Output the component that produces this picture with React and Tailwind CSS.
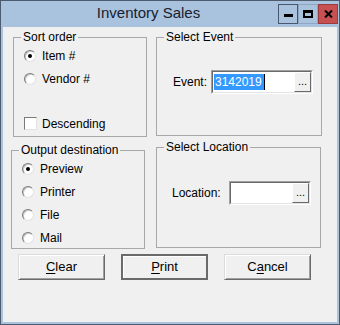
import React from 'react';

const font = { fontFamily: '"Liberation Sans", Arial, sans-serif' };

const Radio = ({ checked, label }) => (
  <div className="flex items-center h-[17px]">
    <span className="relative w-[12px] h-[12px] rounded-full bg-white border border-t-[#7a7a7a] border-l-[#7a7a7a] border-b-[#e2e2e2] border-r-[#e2e2e2] shadow-[inset_1px_1px_0_#c8c8c8]">
      {checked && (
        <span className="absolute left-[3px] top-[3px] w-[4px] h-[4px] rounded-full bg-black" />
      )}
    </span>
    <span className="ml-[6px] text-[12px] text-black leading-none">{label}</span>
  </div>
);

// group box; padding goes on the inner div so the legend stays at the left
const Group = ({ title, className, inner, children }) => (
  <fieldset className={`border border-[#a8a8a8] ${className}`}>
    <legend className="ml-[7px] px-[2px] text-[12px] leading-[14px] text-black">{title}</legend>
    <div className={inner}>{children}</div>
  </fieldset>
);

const Lookup = ({ width, value }) => (
  <div className={`flex h-[24px] ${width} border border-t-[#a0a0a0] border-l-[#a0a0a0] border-b-white border-r-white`}>
    <div className="flex flex-1 border border-t-[#696969] border-l-[#696969] border-b-[#e3e3e3] border-r-[#e3e3e3] bg-white">
      <div className="flex-1 flex items-center pl-[1px]">
        {value && (
          <>
            <span className="bg-[#3399ff] text-white text-[12px] leading-[16px] pl-[1px] pr-[2px]">{value}</span>
            <span className="w-[1px] h-[16px] bg-black" />
          </>
        )}
      </div>
      <button className="w-[17px] bg-[#f0f0f0] border border-t-white border-l-white border-b-[#696969] border-r-[#696969] text-[11px] leading-none text-black flex items-end justify-center pb-[4px]">
        ...
      </button>
    </div>
  </div>
);

const PushButton = ({ children, primary }) => (
  <button
    className={`w-[87px] h-[26px] bg-[#f0f0f0] text-[13px] text-black flex items-center justify-center ${
      primary
        ? 'border-2 border-[#6a6a6a] shadow-[inset_1px_1px_0_#ffffff]'
        : 'border border-t-[#dcdcdc] border-l-[#dcdcdc] border-b-[#6a6a6a] border-r-[#6a6a6a] shadow-[inset_1px_1px_0_#ffffff,inset_-1px_-1px_0_#a0a0a0]'
    }`}
  >
    {children}
  </button>
);

export default function App() {
  return (
    <div className="w-[340px] h-[325px] bg-[#a9c2dd] border border-[#4d5b6c] flex flex-col" style={font}>
      {/* title bar */}
      <div className="h-[26px] flex items-start">
        <div className="flex-1 flex justify-center pl-[18px] pt-[3px]">
          <span className="text-[15px] leading-[18px] text-[#16202e]">Inventory Sales</span>
        </div>
        <div className="flex pt-[3px] pr-[1px]">
          <div className="w-[20px] h-[20px] border border-[#48596f] flex items-end justify-center pb-[6px]">
            <span className="w-[9px] h-[3px] bg-black" />
          </div>
          <div className="w-[20px] h-[20px] border border-[#8ea6c2] flex items-center justify-center">
            <span className="w-[10px] h-[8px] border-2 border-t-[3px] border-black" />
          </div>
          <div className="w-[20px] h-[20px] bg-[#c75050] border border-[#9c3b3b] flex items-center justify-center">
            <svg width="9" height="8" viewBox="0 0 9 8">
              <path d="M1 0.5 L8 7.5 M8 0.5 L1 7.5" stroke="#000" strokeWidth="2" />
            </svg>
          </div>
        </div>
      </div>

      {/* client area */}
      <div className="flex-1 mx-[2px] mb-[2px] bg-[#f0f0f0] pt-[3px] flex flex-col">
        <div className="flex">
          <div className="w-[144px] flex flex-col">
            <Group title="Sort order" className="ml-[10px] w-[134px] h-[107px]" inner="pl-[10px]">
              <div className="mt-[3px]">
                <Radio checked label="Item #" />
              </div>
              <div className="mt-[6px]">
                <Radio label="Vendor #" />
              </div>
              <div className="mt-[28px] flex items-center h-[17px]">
                <span className="w-[13px] h-[13px] bg-white border border-t-[#7a7a7a] border-l-[#7a7a7a] border-b-[#e2e2e2] border-r-[#e2e2e2]" />
                <span className="ml-[5px] text-[12px] text-black leading-none">Descending</span>
              </div>
            </Group>
            <Group title="Output destination" className="mt-[6px] ml-[8px] w-[134px] h-[106px]" inner="pl-[10px]">
              <div className="mt-[3px]">
                <Radio checked label="Preview" />
              </div>
              <div className="mt-[6px]">
                <Radio label="Printer" />
              </div>
              <div className="mt-[6px]">
                <Radio label="File" />
              </div>
              <div className="mt-[6px]">
                <Radio label="Mail" />
              </div>
            </Group>
          </div>

          <div className="ml-[9px] flex flex-col">
            <Group title="Select Event" className="w-[166px] h-[106px]" inner="pl-[16px]">
              <div className="mt-[26px] flex items-center">
                <span className="w-[38px] text-[12px] text-black">Event:</span>
                <Lookup width="w-[102px]" value="3142019" />
              </div>
            </Group>
            <Group title="Select Location" className="mt-[4px] w-[165px] h-[108px]" inner="pl-[15px]">
              <div className="mt-[27px] flex items-center">
                <span className="w-[57px] text-[12px] text-black">Location:</span>
                <Lookup width="w-[82px]" />
              </div>
            </Group>
          </div>
        </div>

        <div className="flex gap-[16px] ml-[15px] mt-[5px]">
          <PushButton>
            <span className="underline underline-offset-2">C</span>lear
          </PushButton>
          <PushButton primary>
            <span className="underline underline-offset-2">P</span>rint
          </PushButton>
          <PushButton>
            C<span className="underline underline-offset-2">a</span>ncel
          </PushButton>
        </div>
      </div>
    </div>
  );
}
